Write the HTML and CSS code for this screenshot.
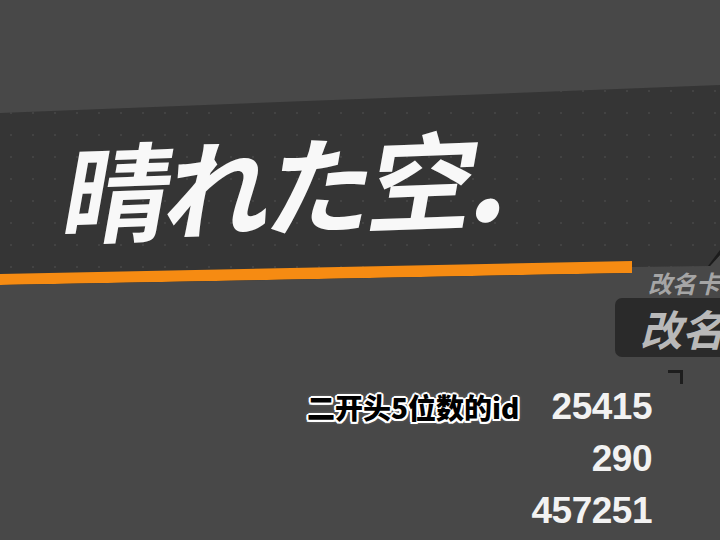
FILE: index.html
```html
<!DOCTYPE html>
<html lang="zh">
<head>
<meta charset="utf-8">
<link rel="stylesheet" href="styles.css">
</head>
<body>
<div class="screen">
  <div class="banner">
    <h1 class="title">晴れた空<span class="dot">.</span></h1>
  </div>
  <div class="card-row">
    <div class="card">
      <div class="card-label">改名卡</div>
      <div class="card-box">改名卡</div>
      <div class="card-corner"></div>
    </div>
  </div>
  <div class="stats">
    <div class="stat-label">二开头5位数的id</div><div class="stat-num">25415</div>
    <div class="stat-label"></div><div class="stat-num">290</div>
    <div class="stat-label"></div><div class="stat-num">457251</div>
  </div>
</div>
</body>
</html>
```
FILE: styles.css
```css
html, body {
  margin: 0;
  padding: 0;
}
body {
  background: #484848;
  width: 720px;
  height: 540px;
  overflow: hidden;
  font-family: "Noto Sans CJK SC", "Noto Sans", sans-serif;
}
.screen {
  width: 720px;
  height: 540px;
  padding-top: 80px;
  box-sizing: border-box;
}
.banner {
  position: relative;
  height: 210px;
  box-sizing: border-box;
  padding: 60px 0 0 57px;
  background-color: #353535;
  background-image: radial-gradient(circle, rgba(255,255,255,0.07) 0.8px, transparent 1.3px);
  background-size: 22px 22px;
  clip-path: polygon(0 33px, 720px 5px, 720px 175px, 710px 186px, 632px 187px, 632px 193px, 0 205px);
}
.banner::before {
  content: "";
  position: absolute;
  inset: 0;
  background: #f68b12;
  clip-path: polygon(0 194px, 632px 181px, 632px 193px, 0 205px);
}
.banner::after {
  content: "";
  position: absolute;
  inset: 0;
  background: #1c1c1c;
  clip-path: polygon(708px 186px, 720px 170px, 720px 176px, 711px 187px);
}
.title {
  margin: 0;
  font-family: "Noto Sans CJK JP", sans-serif;
  font-weight: 700;
  font-size: 107px;
  line-height: 100px;
  letter-spacing: -5px;
  color: #f8f8f8;
  white-space: nowrap;
  transform-origin: left bottom;
  transform: rotate(-2deg) skewX(-12deg);
}
.dot {
  font-size: 125px;
  line-height: 0;
  letter-spacing: 0;
}
.card-row {
  display: flex;
  justify-content: flex-end;
  margin-top: -20px;
}
.card {
  width: 105px;
}
.card-label {
  padding-left: 33px;
  font-weight: 700;
  font-size: 24px;
  line-height: 26px;
  font-style: italic;
  color: #a5a5a5;
  white-space: nowrap;
}
.card-box {
  margin-top: 2px;
  width: 130px;
  height: 59px;
  box-sizing: border-box;
  padding-left: 25px;
  border-radius: 7px;
  background: #2a2a2a;
  color: #b9b9b9;
  font-weight: 700;
  font-style: italic;
  font-size: 42px;
  line-height: 59px;
  white-space: nowrap;
  overflow: hidden;
}
.card-corner {
  margin: 13px 0 0 53px;
  width: 12px;
  height: 11px;
  border-top: 3px solid #1e1e1e;
  border-right: 3px solid #1e1e1e;
}
.stats {
  display: grid;
  grid-template-columns: auto auto;
  justify-content: end;
  column-gap: 12px;
  padding-right: 68px;
  margin-top: -3px;
}
.stat-label {
  font-family: "Noto Sans CJK SC", sans-serif;
  font-weight: 900;
  font-size: 28px;
  line-height: 52px;
  color: #000;
  white-space: nowrap;
  text-shadow: 2px 0 #fff, -2px 0 #fff, 0 2px #fff, 0 -2px #fff,
    1.5px 1.5px #fff, -1.5px 1.5px #fff, 1.5px -1.5px #fff, -1.5px -1.5px #fff,
    0 0 4px rgba(255,255,255,0.6);
}
.stat-num {
  font-family: "Liberation Sans", Arial, sans-serif;
  font-weight: 700;
  font-size: 37px;
  line-height: 52px;
  letter-spacing: -0.5px;
  color: #f2f2f2;
  text-align: right;
}
```
